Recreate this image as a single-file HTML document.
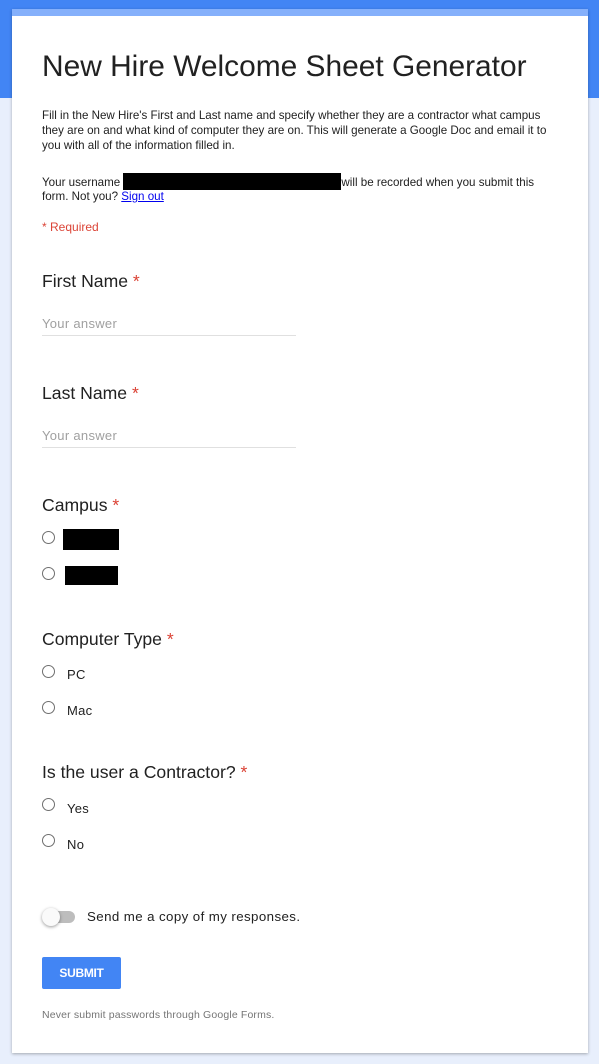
<!DOCTYPE html>
<html><head><meta charset="utf-8"><style>
*{margin:0;padding:0;box-sizing:border-box}
body{width:606px;height:1064px;background:#fff;font-family:"Liberation Sans",sans-serif;position:relative;overflow:hidden;color:#212121}
.bg{position:absolute;left:0;top:0;width:599px;height:1064px;background:#e8effc}
.band{position:absolute;left:0;top:0;width:599px;height:98px;background:#4285f4}
.card{position:absolute;left:12px;top:9px;width:576px;height:1044px;background:#fff;box-shadow:0 1px 3px rgba(0,0,0,.3)}
.card .top{position:absolute;left:0;top:0;width:100%;height:7px;background:#85b0fb}
.a{position:absolute;white-space:nowrap}
.lbl{font-size:17.6px;color:#212121}
.req{color:#db4437}
.ph{font-size:13px;color:#a0a0a0;letter-spacing:.3px}
.ul{position:absolute;left:42px;width:254px;height:1px;background:#e0e0e0}
.r{position:absolute;left:42px;width:13px;height:13px;border:1px solid #6f6f6f;border-radius:50%}
.opt{font-size:13px;color:#212121;letter-spacing:.3px}
.blk{position:absolute;background:#000}
</style></head><body>
<div class="bg"></div>
<div class="band"></div>
<div class="card"><div class="top"></div></div>
<div class="a" style="left:42px;top:50px;font-size:29.9px;color:#212121">New Hire Welcome Sheet Generator</div>
<div class="a" style="left:42px;top:108px;font-size:11.6px;line-height:15px;color:#212121">Fill in the New Hire's First and Last name and specify whether they are a contractor what campus<br>they are on and what kind of computer they are on. This will generate a Google Doc and email it to<br>you with all of the information filled in.</div>
<div class="a" style="left:42px;top:173px;font-size:11.6px;line-height:14px">Your username <span style="display:inline-block;width:218px;height:17px;background:#000;vertical-align:-4px"></span>will be recorded when you submit this<br>form. Not you? <a style="color:#00e;text-decoration:underline">Sign out</a></div>
<div class="a" style="left:42px;top:220px;font-size:12px;color:#db4437">* Required</div>

<div class="a lbl" style="left:42px;top:271px">First Name <span class="req">*</span></div>
<div class="a ph" style="left:42px;top:316px">Your answer</div>
<div class="ul" style="top:335px"></div>

<div class="a lbl" style="left:42px;top:383px">Last Name <span class="req">*</span></div>
<div class="a ph" style="left:42px;top:428px">Your answer</div>
<div class="ul" style="top:447px"></div>

<div class="a lbl" style="left:42px;top:495px">Campus <span class="req">*</span></div>
<div class="r" style="top:531px"></div><div class="blk" style="left:63px;top:529px;width:56px;height:21px"></div>
<div class="r" style="top:567px"></div><div class="blk" style="left:65px;top:566px;width:53px;height:19px"></div>

<div class="a lbl" style="left:42px;top:629px">Computer Type <span class="req">*</span></div>
<div class="r" style="top:665px"></div><div class="a opt" style="left:67px;top:667px">PC</div>
<div class="r" style="top:701px"></div><div class="a opt" style="left:67px;top:703px">Mac</div>

<div class="a lbl" style="left:42px;top:762px">Is the user a Contractor? <span class="req">*</span></div>
<div class="r" style="top:798px"></div><div class="a opt" style="left:67px;top:801px">Yes</div>
<div class="r" style="top:834px"></div><div class="a opt" style="left:67px;top:837px">No</div>

<div style="position:absolute;left:47px;top:911px;width:28px;height:12px;border-radius:6px;background:#bdbdbd"></div>
<div style="position:absolute;left:42px;top:908px;width:18px;height:18px;border-radius:50%;background:#fafafa;box-shadow:0 1px 3px rgba(0,0,0,.4)"></div>
<div class="a" style="left:87px;top:909px;font-size:13.3px;letter-spacing:.4px;color:#212121">Send me a copy of my responses.</div>

<div style="position:absolute;left:42px;top:957px;width:79px;height:32px;background:#4285f4;border-radius:2px;color:#fff;font-size:12px;font-weight:bold;text-align:center;line-height:32px;letter-spacing:-.3px">SUBMIT</div>
<div class="a" style="left:42px;top:1009px;font-size:10.5px;letter-spacing:.15px;color:#757575">Never submit passwords through Google Forms.</div>
</body></html>
